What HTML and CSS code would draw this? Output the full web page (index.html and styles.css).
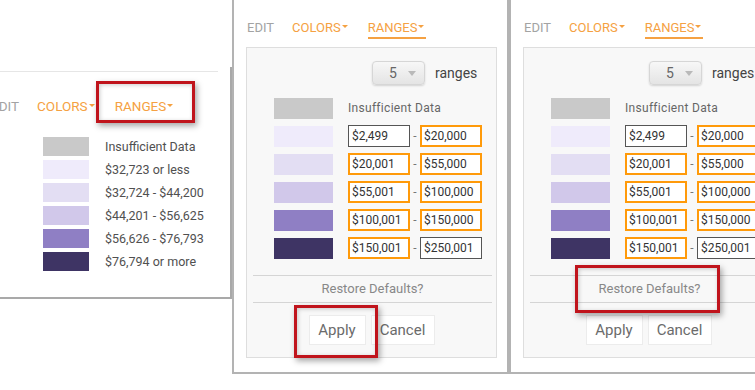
FILE: index.html
```html
<!DOCTYPE html>
<html>

<head>
  <title>Map Legend: Ranges</title>
  <meta charset="utf-8" />
  <link rel="stylesheet" href="styles.css">
</head>

<body>
  <div class="panel legend-panel">
    <div class="legend-rule"></div>
    <nav class="tabs tabs-lg">
      <span class="tab">EDIT</span>
      <span class="tab tab-menu">COLORS</span>
      <span class="tab tab-menu">RANGES</span>
    </nav>
    <ul class="legend">
      <li><span class="swatch c0"></span>Insufficient Data</li>
      <li><span class="swatch c1"></span>$32,723 or less</li>
      <li><span class="swatch c2"></span>$32,724 - $44,200</li>
      <li><span class="swatch c3"></span>$44,201 - $56,625</li>
      <li><span class="swatch c4"></span>$56,626 - $76,793</li>
      <li><span class="swatch c5"></span>$76,794 or more</li>
    </ul>
    <div class="callout callout-tab"></div>
  </div>

  <div class="panel editor-panel">
    <nav class="tabs">
      <span class="tab">EDIT</span>
      <span class="tab tab-menu">COLORS</span>
      <span class="tab tab-menu active">RANGES</span>
    </nav>
    <div class="ranges-box">
      <div class="count-row">
        <div class="count-select">5<span class="select-caret"></span></div>
        <span class="count-label">ranges</span>
      </div>
      <div class="range-row"><span class="swatch c0"></span><span class="no-data">Insufficient Data</span></div>
      <div class="range-row"><span class="swatch c1"></span><input class="range-input" value="$2,499"><span class="dash">-</span><input class="range-input changed" value="$20,000"></div>
      <div class="range-row"><span class="swatch c2"></span><input class="range-input changed" value="$20,001"><span class="dash">-</span><input class="range-input changed" value="$55,000"></div>
      <div class="range-row"><span class="swatch c3"></span><input class="range-input changed" value="$55,001"><span class="dash">-</span><input class="range-input changed" value="$100,000"></div>
      <div class="range-row"><span class="swatch c4"></span><input class="range-input changed" value="$100,001"><span class="dash">-</span><input class="range-input changed" value="$150,000"></div>
      <div class="range-row"><span class="swatch c5"></span><input class="range-input changed" value="$150,001"><span class="dash">-</span><input class="range-input" value="$250,001"></div>
      <div class="restore">Restore Defaults?</div>
      <div class="actions">
        <button class="btn btn-apply">Apply</button>
        <button class="btn btn-cancel">Cancel</button>
      </div>
    </div>
    <div class="callout callout-apply"></div>
  </div>

  <div class="panel editor-panel">
    <nav class="tabs">
      <span class="tab">EDIT</span>
      <span class="tab tab-menu">COLORS</span>
      <span class="tab tab-menu active">RANGES</span>
    </nav>
    <div class="ranges-box">
      <div class="count-row">
        <div class="count-select">5<span class="select-caret"></span></div>
        <span class="count-label">ranges</span>
      </div>
      <div class="range-row"><span class="swatch c0"></span><span class="no-data">Insufficient Data</span></div>
      <div class="range-row"><span class="swatch c1"></span><input class="range-input" value="$2,499"><span class="dash">-</span><input class="range-input changed" value="$20,000"></div>
      <div class="range-row"><span class="swatch c2"></span><input class="range-input changed" value="$20,001"><span class="dash">-</span><input class="range-input changed" value="$55,000"></div>
      <div class="range-row"><span class="swatch c3"></span><input class="range-input changed" value="$55,001"><span class="dash">-</span><input class="range-input changed" value="$100,000"></div>
      <div class="range-row"><span class="swatch c4"></span><input class="range-input changed" value="$100,001"><span class="dash">-</span><input class="range-input changed" value="$150,000"></div>
      <div class="range-row"><span class="swatch c5"></span><input class="range-input changed" value="$150,001"><span class="dash">-</span><input class="range-input" value="$250,001"></div>
      <div class="restore">Restore Defaults?</div>
      <div class="actions">
        <button class="btn btn-apply">Apply</button>
        <button class="btn btn-cancel">Cancel</button>
      </div>
    </div>
    <div class="callout callout-restore"></div>
  </div>
</body>

</html>
```

FILE: styles.css
```css
body {
  margin: 0;
  width: 755px;
  height: 390px;
  overflow: hidden;
  display: flex;
  align-items: flex-start;
  background: white;
  font-family: Roboto, "Liberation Sans", sans-serif;
  color: #555;
}

.panel {
  position: relative;
  flex-shrink: 0;
  box-sizing: border-box;
  background: white;
}

/* left: the finished legend */
.legend-panel {
  width: 260px;
  height: 232px;
  margin-left: -28px;
  margin-top: 67px;
  border-right: 2px solid #a9a9a9;
  border-bottom: 2px solid #a9a9a9;
}

.legend-rule {
  margin: 4px 12px 0 0;
  border-top: 1px solid #e6e6e6;
}

.tabs {
  display: flex;
  gap: 18px;
  padding: 20px 0 0 13px;
  font-size: 13px;
  line-height: 16px;
}

.tabs-lg {
  padding: 26px 0 0 19px;
  font-size: 13.5px;
}

.tab {
  color: #a3a3a3;
  padding-bottom: 1px;
  border-bottom: 2px solid transparent;
}

.tab-menu {
  color: #f5a142;
}

.tab-menu::after {
  content: "";
  display: inline-block;
  vertical-align: 4px;
  margin: 0 2px 0 1px;
  border-left: 3px solid transparent;
  border-right: 3px solid transparent;
  border-top: 3px solid #f5a142;
}

.tab-menu.active {
  border-bottom-color: #f5a142;
}

.legend {
  list-style: none;
  margin: 20px 0 0;
  padding: 0 0 0 71px;
  display: flex;
  flex-direction: column;
  gap: 4px;
  font-size: 12.5px;
  color: #505050;
}

.legend li {
  display: flex;
  align-items: center;
  gap: 16px;
  height: 19px;
}

.legend .swatch {
  width: 46px;
  height: 19px;
}

.swatch {
  flex-shrink: 0;
}

.c0 { background: #c9c9c9; }
.c1 { background: #efebfb; }
.c2 { background: #e3def3; }
.c3 { background: #d1c8ea; }
.c4 { background: #8f7fc4; }
.c5 { background: #3e3464; }

/* middle and right: the range editor */
.editor-panel {
  width: 277px;
  height: 374px;
  border: 2px solid #b3b3b3;
  border-top: none;
}

.ranges-box {
  margin: 8px 10px 0 12px;
  padding: 13px 0 12px;
  border: 1px solid #dedede;
  background: #f8f8f8;
}

.count-row {
  display: flex;
  align-items: center;
  gap: 10px;
  padding-left: 125px;
}

.count-select {
  box-sizing: border-box;
  width: 53px;
  height: 24px;
  padding-left: 16px;
  display: flex;
  align-items: center;
  gap: 11px;
  font-size: 14px;
  color: #666;
  border: 1px solid #d6d6d6;
  border-radius: 4px;
  background: linear-gradient(#f7f7f7, #e4e4e4);
  box-shadow: 0 1px 2px rgba(0, 0, 0, 0.15);
}

.select-caret {
  border-left: 4px solid transparent;
  border-right: 4px solid transparent;
  border-top: 5px solid #b9b9b9;
}

.count-label {
  font-size: 14px;
  color: #444;
}

.range-row {
  display: flex;
  align-items: center;
  height: 22px;
  margin-top: 6px;
  padding-left: 27px;
}

.count-row + .range-row {
  margin-top: 12px;
}

.range-row .swatch {
  width: 59px;
  height: 21px;
  margin-right: 15px;
}

.no-data {
  font-size: 12px;
  letter-spacing: 0.3px;
  color: #666;
}

.range-input {
  box-sizing: border-box;
  width: 62px;
  height: 22px;
  margin: 0;
  padding: 0 3px;
  font-family: Roboto, "Liberation Sans", sans-serif;
  font-size: 12px;
  color: #333;
  background: white;
  border: 1px solid #555;
  border-radius: 0;
  outline: none;
}

.range-input.changed {
  border: 2px solid #ff9a0a;
  padding: 0 2px;
}

.dash {
  width: 10px;
  text-align: center;
  font-size: 12px;
  color: #777;
}

.restore {
  margin: 16px 4px 0 6px;
  height: 26px;
  line-height: 26px;
  text-align: center;
  font-size: 13px;
  color: #888;
  border-top: 1px solid #d5d5d5;
  border-bottom: 1px solid #d5d5d5;
}

.actions {
  display: flex;
  justify-content: center;
  gap: 5px;
  margin-top: 12px;
}

.btn {
  box-sizing: border-box;
  height: 30px;
  padding: 0;
  font-family: Roboto, "Liberation Sans", sans-serif;
  font-size: 15px;
  color: #6b6b6b;
  background: white;
  border: 1px solid #ececec;
}

.btn-apply {
  width: 57px;
}

.btn-cancel {
  width: 64px;
}

/* red annotation boxes drawn over the screenshots */
.callout {
  position: absolute;
  box-sizing: border-box;
  border: 3px solid #c0141c;
  box-shadow: 2px 3px 6px rgba(0, 0, 0, 0.35), inset 1px 1px 4px rgba(0, 0, 0, 0.2);
}

.callout-tab {
  left: 124px;
  top: 14px;
  width: 99px;
  height: 42px;
}

.callout-apply {
  left: 60px;
  top: 305px;
  width: 84px;
  height: 53px;
}

.callout-restore {
  left: 64px;
  top: 265px;
  width: 145px;
  height: 48px;
}
```
